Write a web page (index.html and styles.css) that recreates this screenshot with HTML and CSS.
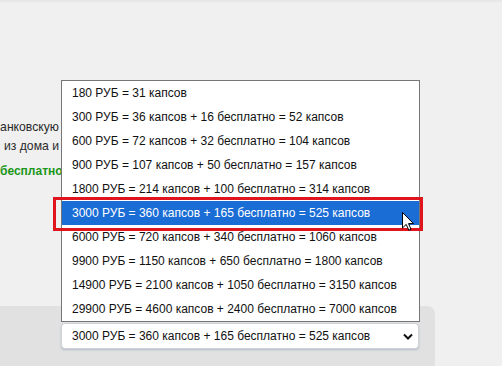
FILE: index.html
```html
<!DOCTYPE html>
<html lang="ru">
<head>
<meta charset="utf-8">
<link rel="stylesheet" href="styles.css">
</head>
<body>
<div class="page">
  <div class="top-shadow"></div>
  <div class="content">
    <div class="text">
      <div class="line">анковскую</div>
      <div class="line">из дома и</div>
      <div class="line green">бесплатно</div>
    </div>
  </div>
  <div class="panel">
    <div class="select-box">
      <span class="select-value">3000 РУБ = 360 капсов + 165 бесплатно = 525 капсов</span>
      <svg class="chev" width="10" height="7" viewBox="0 0 10 7"><path d="M1 1.5 L5 5.5 L9 1.5" fill="none" stroke="#111" stroke-width="2"/></svg>
    </div>
  </div>

  <ul class="dropdown">
    <li class="opt">180 РУБ = 31 капсов</li>
    <li class="opt">300 РУБ = 36 капсов + 16 бесплатно = 52 капсов</li>
    <li class="opt">600 РУБ = 72 капсов + 32 бесплатно = 104 капсов</li>
    <li class="opt">900 РУБ = 107 капсов + 50 бесплатно = 157 капсов</li>
    <li class="opt">1800 РУБ = 214 капсов + 100 бесплатно = 314 капсов</li>
    <li class="opt selected">3000 РУБ = 360 капсов + 165 бесплатно = 525 капсов</li>
    <li class="opt">6000 РУБ = 720 капсов + 340 бесплатно = 1060 капсов</li>
    <li class="opt">9900 РУБ = 1150 капсов + 650 бесплатно = 1800 капсов</li>
    <li class="opt">14900 РУБ = 2100 капсов + 1050 бесплатно = 3150 капсов</li>
    <li class="opt">29900 РУБ = 4600 капсов + 2400 бесплатно = 7000 капсов</li>
  </ul>
  <div class="highlight"></div>
  <svg class="cursor" width="13" height="19" viewBox="0 0 13 19"><path d="M0.5 0.5 L0.5 16 L4.2 12.4 L6.8 18.2 L9 17.2 L6.5 11.6 L11.5 11.6 Z" fill="#fff" stroke="#000" stroke-width="1" stroke-linejoin="round"/></svg>
</div>
</body>
</html>
```
FILE: styles.css
```css
html, body {
  margin: 0;
  padding: 0;
}
body {
  background: #f0f0f0;
  font-family: "Liberation Sans", Arial, sans-serif;
}
.page {
  position: relative;
  width: 502px;
  height: 366px;
  overflow: hidden;
  display: flex;
  flex-direction: column;
}
.top-shadow {
  height: 3px;
  background: linear-gradient(#e4e4e4, #f0f0f0);
}
.content {
  height: 303px;
  padding-top: 115px;
  box-sizing: border-box;
}
.text {
  width: 59px;
  font-size: 12.2px;
  color: #2a2a2a;
  text-align: right;
}
.line {
  white-space: nowrap;
  height: 19px;
  line-height: 19px;
}
.green {
  margin-top: 6px;
  color: #1b961b;
  font-weight: bold;
  font-size: 12px;
}
.panel {
  flex: 1;
  width: 435px;
  background: #e1e1e1;
  border-top-right-radius: 8px;
  padding: 17px 0 0 61px;
  box-sizing: border-box;
}
.select-box {
  width: 358px;
  height: 26px;
  box-sizing: border-box;
  background: #fff;
  border: 1px solid #cfd3d8;
  border-radius: 4px;
  box-shadow: 0 1px 2px rgba(40, 80, 130, 0.25);
  display: flex;
  align-items: center;
  justify-content: space-between;
  padding: 0 5px 0 10px;
  font-size: 12px;
  color: #111;
}
.chev {
  display: block;
}
.dropdown {
  position: absolute;
  left: 61px;
  top: 80px;
  width: 359px;
  margin: 0;
  padding: 0;
  list-style: none;
  background: #fff;
  border: 1px solid #767676;
  box-sizing: border-box;
  font-size: 12px;
  color: #111;
}
.opt {
  height: 24px;
  line-height: 24px;
  padding-left: 10px;
  white-space: nowrap;
}
.opt.selected {
  background: #1b6dd6;
  color: #fff;
}
.highlight {
  position: absolute;
  left: 53px;
  top: 197px;
  width: 370px;
  height: 34px;
  box-sizing: border-box;
  border: 3px solid #e0141c;
}
.cursor {
  position: absolute;
  left: 402px;
  top: 212px;
}
```
